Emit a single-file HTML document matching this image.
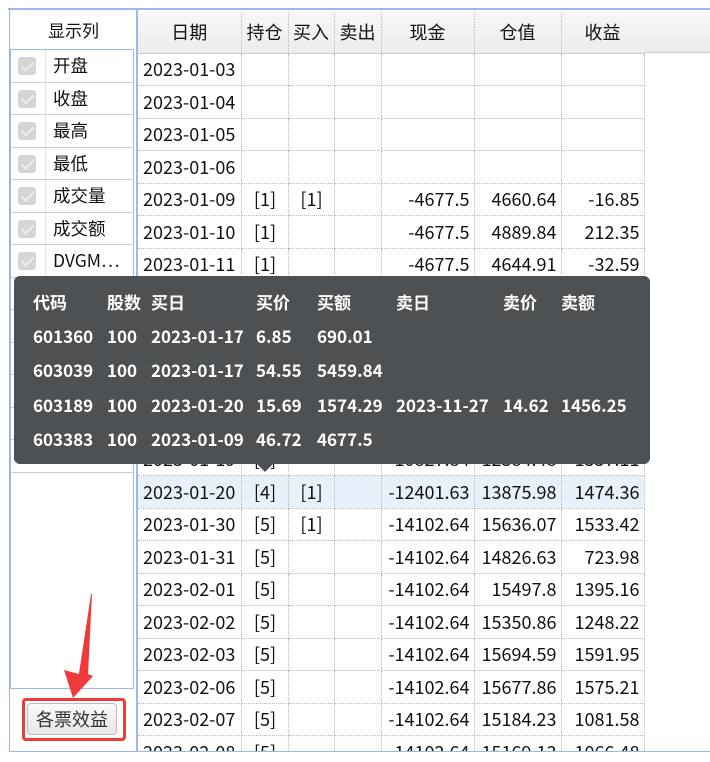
<!DOCTYPE html>
<html><head><meta charset="utf-8"><style>
*{box-sizing:border-box;margin:0;padding:0}
body{width:710px;height:762px;background:#fff;position:relative;overflow:hidden;font-family:"Noto Sans CJK SC","Liberation Sans",sans-serif;color:#111;font-size:17px}
.topline{position:absolute;left:8px;right:0;top:8px;height:2px;background:#9db8e6}
.left{position:absolute;left:9px;top:10px;width:129px;height:742px;border-left:1px solid #9db8e6;border-right:2px solid #9db8e6;border-bottom:1px solid #9db8e6}
.lh{position:absolute;left:0;top:0;width:127px;height:39px;text-align:center;line-height:39px}
.list{position:absolute;left:0;top:39px;width:124px;height:640px;border:1px solid #9db8e6}
.li{height:32.5px;border-bottom:1px solid #ccc;position:relative;line-height:32px}
.li .cb{position:absolute;left:7px;top:7px;width:18px;height:18px;background:#d5d5d5;border-radius:3px}
.li .cb:after{content:"";position:absolute;left:6px;top:2px;width:5px;height:10px;border:solid #eee;border-width:0 2px 2px 0;transform:rotate(45deg)}
.li span{position:absolute;left:42px;font-size:17.5px}
.li .sep{position:absolute;left:34px;top:0;bottom:0;border-left:1px solid #e4e4e4}
.tbl{position:absolute;left:138px;top:12px;width:572px;height:740px;overflow:hidden;border-bottom:1px solid #9db8e6;font-size:18px}
table{border-collapse:collapse;table-layout:fixed;width:506px}
th{height:41px;font-weight:normal;background:linear-gradient(#f8f8f8,#ececec);border-right:1px dotted #bbb;border-bottom:1px solid #ccc}
td{height:32.5px;border-right:1px dotted #bbb;border-bottom:1px dotted #bbb;white-space:nowrap;padding:0 4px 0 5px}
td.c{text-align:center}td.r{text-align:right}
tr.sel td{background:#e8f0fc}
.hdfill{position:absolute;left:506px;top:0;width:70px;height:41px;background:linear-gradient(#f8f8f8,#ececec);border-bottom:1px solid #ccc}
.tip{position:absolute;left:14px;top:276px;width:636px;height:188px;background:#4e5154;border-radius:6px;color:#fff;font-weight:bold}
.tip div{position:absolute;white-space:nowrap;line-height:20px}
.arr{position:absolute;left:257px;top:464px;width:0;height:0;border-left:8px solid transparent;border-right:8px solid transparent;border-top:8px solid #4e5154}
.btnbox{position:absolute;left:22px;top:698px;width:104px;height:43px;border:3px solid #f03a3a;border-radius:4px}
.btn{position:absolute;left:27px;top:703px;width:90px;height:32px;border:1px solid #bbb;border-radius:4px;background:linear-gradient(#fafafa,#e6e6e6);text-align:center;line-height:30px;color:#333;font-size:18px}
</style></head><body>
<div class="topline"></div>
<div class="left"><div class="lh">显示列</div>
<div class="list">
<div class="li"><i class="cb"></i><i class="sep"></i><span>开盘</span></div>
<div class="li"><i class="cb"></i><i class="sep"></i><span>收盘</span></div>
<div class="li"><i class="cb"></i><i class="sep"></i><span>最高</span></div>
<div class="li"><i class="cb"></i><i class="sep"></i><span>最低</span></div>
<div class="li"><i class="cb"></i><i class="sep"></i><span>成交量</span></div>
<div class="li"><i class="cb"></i><i class="sep"></i><span>成交额</span></div>
<div class="li"><i class="cb"></i><i class="sep"></i><span>DVGM⋯</span></div>
<div class="li"></div><div class="li"></div><div class="li"></div><div class="li"></div><div class="li"></div><div class="li"></div>
</div></div>
<div class="tbl"><div class="hdfill"></div>
<table><colgroup><col style="width:103px"><col style="width:47px"><col style="width:46px"><col style="width:47px"><col style="width:93px"><col style="width:87px"><col style="width:83px"></colgroup>
<tr><th>日期</th><th>持仓</th><th>买入</th><th>卖出</th><th>现金</th><th>仓值</th><th>收益</th></tr>
<tr><td>2023-01-03</td><td></td><td></td><td></td><td></td><td></td><td></td></tr>
<tr><td>2023-01-04</td><td></td><td></td><td></td><td></td><td></td><td></td></tr>
<tr><td>2023-01-05</td><td></td><td></td><td></td><td></td><td></td><td></td></tr>
<tr><td>2023-01-06</td><td></td><td></td><td></td><td></td><td></td><td></td></tr>
<tr><td>2023-01-09</td><td class="c">[1]</td><td class="c">[1]</td><td></td><td class="r">-4677.5</td><td class="r">4660.64</td><td class="r">-16.85</td></tr>
<tr><td>2023-01-10</td><td class="c">[1]</td><td></td><td></td><td class="r">-4677.5</td><td class="r">4889.84</td><td class="r">212.35</td></tr>
<tr><td>2023-01-11</td><td class="c">[1]</td><td></td><td></td><td class="r">-4677.5</td><td class="r">4644.91</td><td class="r">-32.59</td></tr>
<tr><td>2023-01-12</td><td class="c">[1]</td><td></td><td></td><td class="r">-4677.5</td><td class="r">4700.00</td><td class="r">22.50</td></tr>
<tr><td>2023-01-13</td><td class="c">[1]</td><td></td><td></td><td class="r">-4677.5</td><td class="r">4700.00</td><td class="r">22.50</td></tr>
<tr><td>2023-01-16</td><td class="c">[1]</td><td></td><td></td><td class="r">-4677.5</td><td class="r">4700.00</td><td class="r">22.50</td></tr>
<tr><td>2023-01-17</td><td class="c">[3]</td><td class="c">[2]</td><td></td><td class="r">-10827.84</td><td class="r">12000.00</td><td class="r">1100.00</td></tr>
<tr><td>2023-01-18</td><td class="c">[3]</td><td></td><td></td><td class="r">-10827.84</td><td class="r">12300.00</td><td class="r">1400.00</td></tr>
<tr><td>2023-01-19</td><td class="c">[3]</td><td></td><td></td><td class="r">-10827.84</td><td class="r">12384.48</td><td class="r">1357.11</td></tr>
<tr class="sel"><td>2023-01-20</td><td class="c">[4]</td><td class="c">[1]</td><td></td><td class="r">-12401.63</td><td class="r">13875.98</td><td class="r">1474.36</td></tr>
<tr><td>2023-01-30</td><td class="c">[5]</td><td class="c">[1]</td><td></td><td class="r">-14102.64</td><td class="r">15636.07</td><td class="r">1533.42</td></tr>
<tr><td>2023-01-31</td><td class="c">[5]</td><td></td><td></td><td class="r">-14102.64</td><td class="r">14826.63</td><td class="r">723.98</td></tr>
<tr><td>2023-02-01</td><td class="c">[5]</td><td></td><td></td><td class="r">-14102.64</td><td class="r">15497.8</td><td class="r">1395.16</td></tr>
<tr><td>2023-02-02</td><td class="c">[5]</td><td></td><td></td><td class="r">-14102.64</td><td class="r">15350.86</td><td class="r">1248.22</td></tr>
<tr><td>2023-02-03</td><td class="c">[5]</td><td></td><td></td><td class="r">-14102.64</td><td class="r">15694.59</td><td class="r">1591.95</td></tr>
<tr><td>2023-02-06</td><td class="c">[5]</td><td></td><td></td><td class="r">-14102.64</td><td class="r">15677.86</td><td class="r">1575.21</td></tr>
<tr><td>2023-02-07</td><td class="c">[5]</td><td></td><td></td><td class="r">-14102.64</td><td class="r">15184.23</td><td class="r">1081.58</td></tr>
<tr><td>2023-02-08</td><td class="c">[5]</td><td></td><td></td><td class="r">-14102.64</td><td class="r">15169.13</td><td class="r">1066.48</td></tr>
</table></div>
<div class="tip">
<div style="left:19px;top:16px">代码</div><div style="left:93px;top:16px">股数</div><div style="left:137px;top:16px">买日</div><div style="left:242px;top:16px">买价</div><div style="left:303px;top:16px">买额</div><div style="left:382px;top:16px">卖日</div><div style="left:489px;top:16px">卖价</div><div style="left:547px;top:16px">卖额</div>
<div style="left:19px;top:50px">601360</div><div style="left:93px;top:50px">100</div><div style="left:137px;top:50px">2023-01-17</div><div style="left:242px;top:50px">6.85</div><div style="left:303px;top:50px">690.01</div>
<div style="left:19px;top:84px">603039</div><div style="left:93px;top:84px">100</div><div style="left:137px;top:84px">2023-01-17</div><div style="left:242px;top:84px">54.55</div><div style="left:303px;top:84px">5459.84</div>
<div style="left:19px;top:119px">603189</div><div style="left:93px;top:119px">100</div><div style="left:137px;top:119px">2023-01-20</div><div style="left:242px;top:119px">15.69</div><div style="left:303px;top:119px">1574.29</div><div style="left:382px;top:119px">2023-11-27</div><div style="left:489px;top:119px">14.62</div><div style="left:547px;top:119px">1456.25</div>
<div style="left:19px;top:153px">603383</div><div style="left:93px;top:153px">100</div><div style="left:137px;top:153px">2023-01-09</div><div style="left:242px;top:153px">46.72</div><div style="left:303px;top:153px">4677.5</div>
</div>
<div class="arr"></div>
<div class="btnbox"></div>
<div class="btn">各票效益</div>
<svg style="position:absolute;left:0;top:0" width="710" height="762"><polygon points="92,594 88,674 93,676 73,698 64,670 79,674 91,594" fill="#f03a3a"/><polygon points="91.5,594 79,674 88,674" fill="#f03a3a"/></svg>
</body></html>
